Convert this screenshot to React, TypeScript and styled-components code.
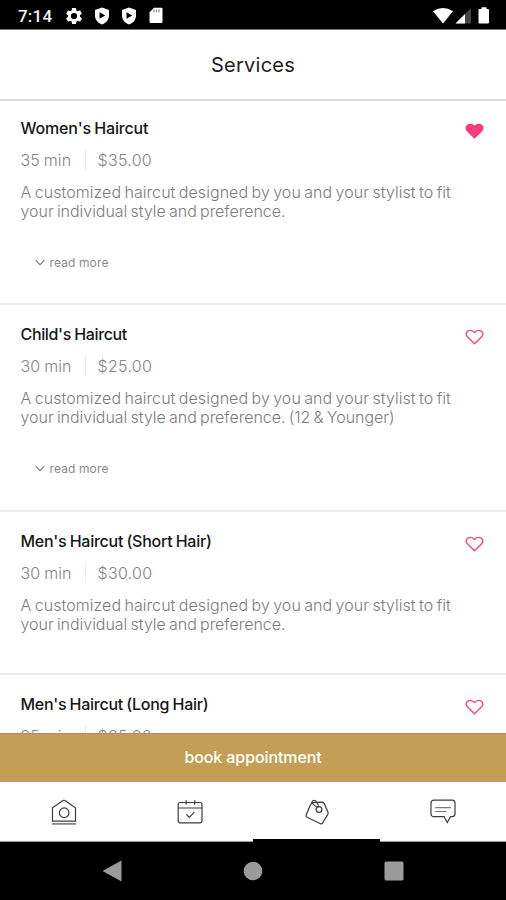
import React from "react";
import styled, { createGlobalStyle } from "styled-components";

const GlobalStyle = createGlobalStyle`
  body { margin: 0; background: #fff; }
  * { box-sizing: border-box; }
  svg { display: block; }
`;

const Screen = styled.div`
  width: 506px;
  height: 900px;
  display: flex;
  flex-direction: column;
  overflow: hidden;
  background: #fff;
  font-family: Inter, "Liberation Sans", sans-serif;
  white-space: nowrap;
`;

const StatusBar = styled.div`
  height: 30px;
  flex: none;
  display: flex;
  justify-content: space-between;
  padding: 0 15px 0 18px;
  background: #000;
  border-bottom: 1px solid #777;
`;

const StatusGroup = styled.div`
  display: flex;
  align-items: center;
  height: 31px;
`;

const Clock = styled.span`
  width: 48px;
  color: #f4f4f4;
  font: 500 17px/20px Roboto, sans-serif;
  letter-spacing: 0.2px;
`;

const IconSlot = styled.span<{ $w: number }>`
  width: ${(p) => p.$w}px;
`;

const Header = styled.header`
  height: 71px;
  flex: none;
  display: flex;
  align-items: center;
  justify-content: center;
  border-bottom: 2px solid #dadada;
`;

const HeaderTitle = styled.h1`
  margin: 0;
  font-size: 20px;
  line-height: 24px;
  font-weight: 400;
  letter-spacing: 0.25px;
  color: #1c1c1c;
`;

const ServiceList = styled.main`
  height: 632px;
  flex: none;
  overflow: hidden;
`;

const Service = styled.article<{ $height: number; $top: number }>`
  height: ${(p) => p.$height}px;
  padding: ${(p) => p.$top}px 22px 0 20.5px;
  border-bottom: 2px solid #ececec;
`;

const TitleRow = styled.div`
  display: flex;
  justify-content: space-between;
  height: 20px;
`;

const Title = styled.h2<{ $spacing: number }>`
  margin: 0;
  font-size: 16px;
  line-height: 20px;
  font-weight: 500;
  letter-spacing: ${(p) => p.$spacing}px;
  word-spacing: -0.7px;
  color: #161616;
`;

const HeartSlot = styled.span`
  padding-top: 4px;
`;

const Meta = styled.div`
  display: flex;
  align-items: center;
  height: 20px;
  margin-top: 12px;
  font-size: 16px;
  font-weight: 300;
  color: #848484;
`;

const Duration = styled.span`
  width: 64px;
  letter-spacing: 0.1px;
  word-spacing: -0.7px;
`;

const Price = styled.span`
  padding-left: 12px;
  border-left: 1px solid #ececec;
  letter-spacing: 0.3px;
`;

const Description = styled.p`
  margin: 12.5px 0 0;
  font-size: 16px;
  line-height: 19.5px;
  font-weight: 300;
  word-spacing: -1.2px;
  color: #7c7c7c;
`;

const Line = styled.span<{ $spacing: number }>`
  display: block;
  letter-spacing: ${(p) => p.$spacing}px;
`;

const ReadMore = styled.div`
  display: flex;
  align-items: center;
  gap: 5px;
  height: 16px;
  margin: 32.5px 0 0 14px;
  font-size: 12px;
  font-weight: 400;
  letter-spacing: 0.12px;
  color: #8a8a8a;
`;

const BookButton = styled.button`
  height: 49px;
  flex: none;
  padding: 0 0 2px;
  border: 0;
  border-top: 1px solid #b8903c;
  background: #c39e54;
  color: #fff;
  font: 500 16px/20px Inter, sans-serif;
  letter-spacing: -0.1px;
`;

const TabBar = styled.nav`
  height: 60px;
  flex: none;
  display: grid;
  grid-template-columns: repeat(4, 1fr);
`;

const Tab = styled.div<{ $active?: boolean }>`
  display: flex;
  justify-content: center;
  padding: 16px 0 0 1px;
  border-bottom: ${(p) => (p.$active ? "3px solid #000" : "1px solid #999")};
`;

const SystemNav = styled.div`
  height: 58px;
  flex: none;
  display: flex;
  align-items: center;
  justify-content: space-between;
  padding: 0 102px;
  background: #000;
`;

const Shield = () => (
  <svg width="16" height="18" viewBox="0 0 16 18">
    <path d="M8 .5 15 3.1v5.3c0 4-2.7 7.3-7 9.1-4.3-1.8-7-5.1-7-9.1V3.1Z" fill="#fff" />
    <path d="M5.5 5.3v6.4L11.3 8.5Z" fill="#000" />
  </svg>
);

const Gear = () => (
  <svg width="16" height="18" viewBox="2 1 20 22">
    <path
      fill="#fff"
      d="M19.4 13c.04-.33.06-.66.06-1s-.02-.67-.06-1l2.1-1.65a.5.5 0 0 0 .12-.64l-2-3.46a.5.5 0 0 0-.6-.22l-2.5 1a7.3 7.3 0 0 0-1.7-.98L14.5 2.4A.5.5 0 0 0 14 2h-4a.5.5 0 0 0-.5.42l-.37 2.65c-.6.24-1.17.58-1.69.98l-2.5-1a.5.5 0 0 0-.6.22l-2 3.46a.5.5 0 0 0 .12.64L4.6 11a8 8 0 0 0 0 2l-2.11 1.65a.5.5 0 0 0-.12.64l2 3.46c.12.22.4.3.6.22l2.5-1c.5.4 1.08.73 1.7.98l.37 2.65c.03.24.25.42.5.42h4c.25 0 .46-.18.5-.42l.37-2.65a7.3 7.3 0 0 0 1.69-.98l2.5 1c.23.08.5 0 .6-.22l2-3.46a.5.5 0 0 0-.12-.64ZM12 15.9a3.9 3.9 0 1 1 0-7.8 3.9 3.9 0 0 1 0 7.8Z"
    />
  </svg>
);

const SdCard = () => (
  <svg width="14" height="17" viewBox="0 0 14 17">
    <path d="M5 .8h7.5a1 1 0 0 1 1 1v13.2a1 1 0 0 1-1 1H1.5a1 1 0 0 1-1-1V5.2Z" fill="#fff" />
    <path d="M5 2.5v2.8M7.5 2.5v2.8M10 2.5v2.8" stroke="#888" strokeWidth="1.2" />
  </svg>
);

const Signals = () => (
  <svg width="58" height="20" viewBox="0 0 58 20">
    <path d="M0 5.3Q10 -1.5 20 5.3L10 17.5Z" fill="#fff" />
    <path d="M22.5 17.5 38 2v15.5Z" fill="#444" />
    <path d="M22.5 17.5 32 8v9.5Z" fill="#fff" />
    <path d="M45.5 4q0-1 1-1h2V1.2h5V3h1.5q1 0 1 1v12.5q0 1-1 1h-8.500q-1 0-1-1Z" fill="#fff" />
  </svg>
);

const Heart = ({ filled }: { filled?: boolean }) => (
  <svg width="19" height="18" viewBox="0 0 19 18">
    <path
      d="M9.500 15.700 3.100 9.600C1 7.600.9 5.100 2.300 3.600 4.200 1.700 7.100 1.900 9.500 4.400c2.400-2.500 5.300-2.700 7.200-.8C18.100 5.100 18 7.600 15.900 9.600Z"
      fill={filled ? "#fb3c82" : "none"}
      stroke={filled ? "#f6377c" : "#ee4a84"}
      strokeWidth="1.4"
      strokeLinejoin="round"
    />
  </svg>
);

const Chevron = () => (
  <svg width="10" height="7" viewBox="0 0 10 7">
    <path d="M.7 1.2 5 5.6l4.3-4.4" fill="none" stroke="#777" strokeWidth="1.1" />
  </svg>
);

const tabStroke = { fill: "none", stroke: "#3c3c3c", strokeWidth: 1.2 };

const HomeIcon = () => (
  <svg width="26" height="28" viewBox="0 0 26 28" {...tabStroke}>
    <path d="M1.500 23.200V9.700L12 2.600q1-.7 2 0L24.500 9.700v13.500Z" />
    <circle cx="13.200" cy="14.700" r="4.800" />
    <path d="M1 25.900h24" stroke="#777" strokeWidth="1.600" />
  </svg>
);

const CalendarIcon = () => (
  <svg width="26" height="28" viewBox="0 0 26 28" {...tabStroke}>
    <rect x="1.200" y="4.500" width="23.800" height="20.300" rx="2" />
    <path d="M1.200 10h23.800M9.200 2.300v4.400M17.700 2.300v4.400M9.500 16.500l2.800 2.800 5-5.200" />
  </svg>
);

const TagIcon = () => (
  <svg width="26" height="28" viewBox="0 0 26 28" {...tabStroke}>
    <path d="M8 4.600 18.800 4.200 20.300 5.500 24 14.300Q24.400 15.500 23.700 16.600L18.400 25.200Q17.700 26.200 16.500 25.700L3 19.200Q1.600 18.500 2.100 17.200L5.800 8.200Z" />
    <circle cx="15" cy="11.500" r="2.900" />
    <path d="M14.700 9.100C13.900 5.200 12 1.900 9.500 2.500 6.700 3.200 8.200 6.500 12.900 9.200" />
  </svg>
);

const ChatIcon = () => (
  <svg width="26" height="28" viewBox="0 0 26 28" {...tabStroke}>
    <path d="M4 2.200h18q3 0 3 3v10.500q0 3-3 3h-1.500L17.300 24.500 14 18.700H4q-3 0-3-3V5.200q0-3 3-3Z" />
    <path d="M5.200 9.700h15.500M5.200 13.500h11.500" stroke="#777" />
  </svg>
);

interface ServiceData {
  title: string;
  spacing: number;
  duration: string;
  price: string;
  height: number;
  top: number;
  favorite?: boolean;
  readMore?: boolean;
  lastLine?: string;
}

const preference = "your individual style and preference.";

const services: ServiceData[] = [
  { title: "Women's Haircut", spacing: -0.18, duration: "35 min", price: "$35.00", height: 204, top: 17, favorite: true, readMore: true, lastLine: preference },
  { title: "Child's Haircut", spacing: -0.35, duration: "30 min", price: "$25.00", height: 207, top: 19, readMore: true, lastLine: preference + " (12 & Younger)" },
  { title: "Men's Haircut (Short Hair)", spacing: -0.25, duration: "30 min", price: "$30.00", height: 163, top: 19, lastLine: preference },
  { title: "Men's Haircut (Long Hair)", spacing: -0.26, duration: "35 min", price: "$35.00", height: 163, top: 19 },
];

export default function App() {
  return (
    <>
      <GlobalStyle />
      <Screen>
        <StatusBar>
          <StatusGroup>
            <Clock>7:14</Clock>
            <IconSlot $w={28}><Gear /></IconSlot>
            <IconSlot $w={27}><Shield /></IconSlot>
            <IconSlot $w={28}><Shield /></IconSlot>
            <SdCard />
          </StatusGroup>
          <StatusGroup>
            <Signals />
          </StatusGroup>
        </StatusBar>
        <Header>
          <HeaderTitle>Services</HeaderTitle>
        </Header>
        <ServiceList>
          {services.map((s) => (
            <Service key={s.title} $height={s.height} $top={s.top}>
              <TitleRow>
                <Title $spacing={s.spacing}>{s.title}</Title>
                <HeartSlot><Heart filled={s.favorite} /></HeartSlot>
              </TitleRow>
              <Meta>
                <Duration>{s.duration}</Duration>
                <Price>{s.price}</Price>
              </Meta>
              {s.lastLine && (
                <Description>
                  <Line $spacing={0.06}>A customized haircut designed by you and your stylist to fit</Line>
                  <Line $spacing={-0.03}>{s.lastLine}</Line>
                </Description>
              )}
              {s.readMore && (
                <ReadMore>
                  <Chevron />
                  read more
                </ReadMore>
              )}
            </Service>
          ))}
        </ServiceList>
        <BookButton>book appointment</BookButton>
        <TabBar>
          <Tab><HomeIcon /></Tab>
          <Tab><CalendarIcon /></Tab>
          <Tab $active><TagIcon /></Tab>
          <Tab><ChatIcon /></Tab>
        </TabBar>
        <SystemNav>
          <svg width="20" height="22" viewBox="0 0 20 22"><path d="M.5 11 19.500.5v21Z" fill="#9b9b9b" /></svg>
          <svg width="20" height="20" viewBox="0 0 20 20"><circle cx="10" cy="10" r="9.300" fill="#9b9b9b" /></svg>
          <svg width="20" height="20" viewBox="0 0 20 20"><rect x=".5" y=".5" width="19" height="19" rx="1.500" fill="#9b9b9b" /></svg>
        </SystemNav>
      </Screen>
    </>
  );
}
